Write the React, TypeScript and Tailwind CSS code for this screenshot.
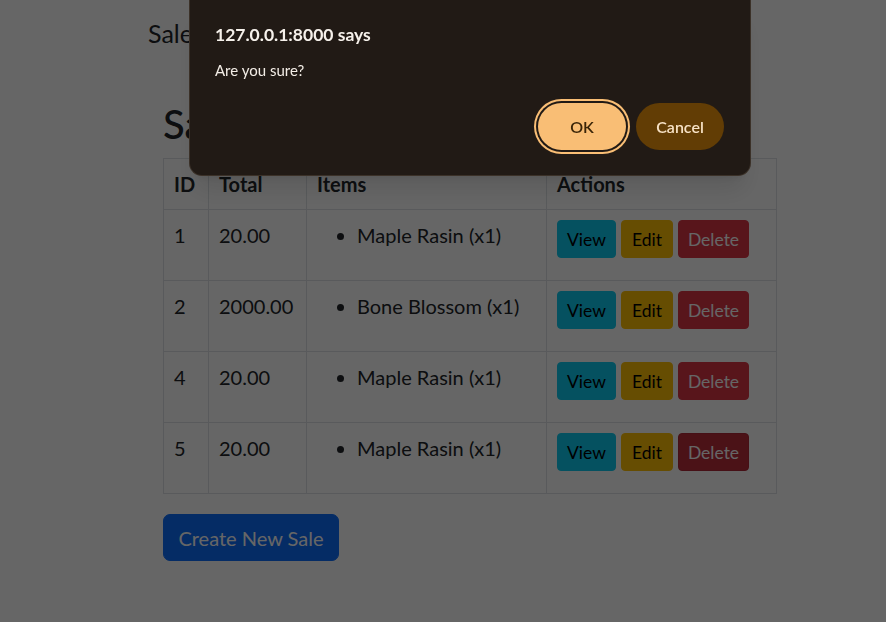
import React from 'react'

const sales = [
  { id: 1, total: '20.00', item: 'Maple Rasin (x1)' },
  { id: 2, total: '2000.00', item: 'Bone Blossom (x1)' },
  { id: 4, total: '20.00', item: 'Maple Rasin (x1)' },
  { id: 5, total: '20.00', item: 'Maple Rasin (x1)' },
]

function SalesPage() {
  return (
    <div className="min-h-screen bg-white text-[#212529] font-['Lato',sans-serif]">
      <div className="pl-[148px] pt-[14px]">
        <div className="text-[25px] leading-[38px]">Sales</div>
      </div>
      <div className="ml-[163px] w-[614px] pt-[48px]">
        <h1 className="text-[40px] leading-[48px] font-medium mb-[10px]">Sales</h1>
        <table className="w-full border-collapse mb-[20px] text-[20px] leading-[30px]">
          <thead>
            <tr>
              <th className="border border-[#dee2e6] p-[10px] text-left font-bold w-[45px]">ID</th>
              <th className="border border-[#dee2e6] p-[10px] text-left font-bold w-[98px]">Total</th>
              <th className="border border-[#dee2e6] p-[10px] text-left font-bold w-[240px]">Items</th>
              <th className="border border-[#dee2e6] p-[10px] text-left font-bold">Actions</th>
            </tr>
          </thead>
          <tbody>
            {sales.map((s, i) => (
              <tr key={s.id}>
                <td className="border border-[#dee2e6] p-[10px] align-top">{s.id}</td>
                <td className="border border-[#dee2e6] p-[10px] align-top">{s.total}</td>
                <td className="border border-[#dee2e6] p-[10px] align-top">
                  <ul className="list-disc pl-[40px] mb-[20px]">
                    <li>{s.item}</li>
                  </ul>
                </td>
                <td className="border border-[#dee2e6] p-[10px] align-top">
                  <div className="flex gap-[5px]">
                    <button className="h-[38px] w-[59px] pt-[2px] rounded-[4px] border border-[#0dcaf0] bg-[#0dcaf0] text-black text-[17.5px]">
                      View
                    </button>
                    <button className="h-[38px] w-[52px] pt-[2px] rounded-[4px] border border-[#ffc107] bg-[#ffc107] text-black text-[17.5px]">
                      Edit
                    </button>
                    <button
                      className={
                        i === 3
                          ? 'h-[38px] w-[71px] pt-[2px] rounded-[4px] border border-[#b02a37] bg-[#bb2d3b] text-white text-[17.5px]'
                          : 'h-[38px] w-[71px] pt-[2px] rounded-[4px] border border-[#dc3545] bg-[#dc3545] text-white text-[17.5px]'
                      }
                    >
                      Delete
                    </button>
                  </div>
                </td>
              </tr>
            ))}
          </tbody>
        </table>
        <button className="h-[47px] w-[176px] rounded-[7px] border border-[#0d6efd] bg-[#0d6efd] text-white text-[20px]">
          Create New Sale
        </button>
      </div>
    </div>
  )
}

function ConfirmDialog() {
  return (
    <div className="fixed left-[190px] top-0 w-[560px] h-[175px] rounded-b-[12px] bg-[#211a15] ring-1 ring-[#3b3128] shadow-xl font-['Lato',sans-serif] px-[25px] pt-[22px] flex flex-col">
      <div className="text-[17.5px] font-bold text-[#f6f1eb] leading-[26px]">127.0.0.1:8000 says</div>
      <div className="text-[15px] text-[#f3ede6] mt-[12px] leading-[20px]">Are you sure?</div>
      <div className="flex justify-end gap-[10px] mt-auto mb-[25px] mr-[1px]">
        <button className="h-[47px] w-[88px] rounded-full bg-[#f9be75] text-[#3a2508] text-[16px] font-semibold ring-2 ring-[#f9be75] ring-offset-2 ring-offset-[#211a15]">
          OK
        </button>
        <button className="h-[47px] w-[88px] rounded-full bg-[#623d05] text-[#f7e2c6] text-[16px] font-semibold">
          Cancel
        </button>
      </div>
    </div>
  )
}

export default function App() {
  return (
    <div className="relative">
      <SalesPage />
      <div className="fixed inset-0 bg-black/60" />
      <ConfirmDialog />
    </div>
  )
}
